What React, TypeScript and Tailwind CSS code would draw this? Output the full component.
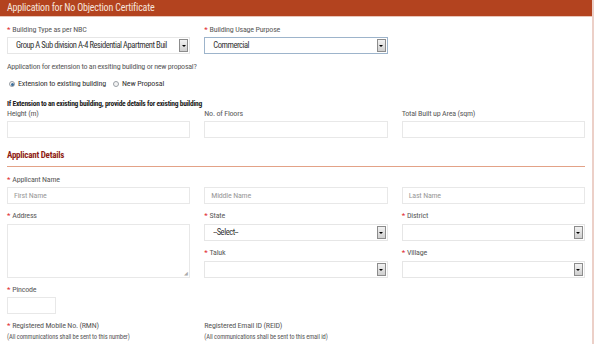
import React from "react";

const F = { fontFamily: '"Roboto Condensed", "Liberation Sans Narrow", Roboto, sans-serif' };

function Req() {
  return <span className="text-[#e0272d] mr-[2px]">*</span>;
}

function Label({ req, children }: { req?: boolean; children: React.ReactNode }) {
  return (
    <div className="h-[10px] leading-[10px] text-[8px] tracking-[-0.2px] text-[#5a5a5a] whitespace-nowrap">
      {req && <Req />}
      {children}
    </div>
  );
}

function Arrow() {
  return (
    <div className="absolute right-[1px] top-[1px] bottom-[1px] w-[9px] bg-gradient-to-b from-[#f2f2f2] to-[#cfcfcf] border border-[#8c8c8c] flex items-center justify-center">
      <div className="w-0 h-0 border-l-[2px] border-r-[2px] border-t-[2px] border-l-transparent border-r-transparent border-t-black" />
    </div>
  );
}

function Select({ text, blue }: { text?: string; blue?: boolean }) {
  return (
    <div
      className={`relative w-full h-[17px] border ${blue ? "border-[#9db4cb]" : "border-[#e6e6e6]"} bg-white flex items-center pl-[8px] text-[8.5px] tracking-[-0.45px] text-[#333] whitespace-nowrap`}
    >
      <span className="block overflow-hidden w-[calc(100%-14px)]">{text}</span>
      <Arrow />
    </div>
  );
}

function Input({ ph, w }: { ph?: string; w?: string }) {
  return (
    <div className={`${w ?? "w-full"} h-[17px] border border-[#e8e8e8] bg-white flex items-center pl-[6px] text-[8px] tracking-[-0.2px] text-[#9a9a9a]`}>
      {ph}
    </div>
  );
}

function Radio({ on }: { on?: boolean }) {
  return (
    <div className="w-[6px] h-[6px] rounded-full border border-[#9aa0a6] bg-[#f4f4f4] flex items-center justify-center">
      {on && <div className="w-[3px] h-[3px] rounded-full bg-[#3d6f9c]" />}
    </div>
  );
}

export default function App() {
  return (
    <div className="w-[597px] h-[344px] overflow-hidden bg-white" style={F}>
      <div className="w-[594px] h-[344px] border-r-2 border-[#ecd0c8]">
        <div className="h-[17px] bg-[#b3431f] text-[#f6e4dc] text-[10px] tracking-[-0.2px] leading-[16px] pl-[7px] border-b border-[#e9c5b8]">
          Application for No Objection Certificate
        </div>
        <div className="px-[7px]">
          <div className="grid grid-cols-3 gap-x-[14px] mt-[8px]">
            <div>
              <Label req>Building Type as per NBC</Label>
              <div className="mt-[2px]">
                <Select text="Group A Sub division A-4 Residential Apartment Buil" />
              </div>
            </div>
            <div>
              <Label req>Building Usage Purpose</Label>
              <div className="mt-[2px]">
                <Select text="Commercial" blue />
              </div>
            </div>
          </div>

          <div className="mt-[8px] h-[10px] leading-[10px] text-[8px] tracking-[-0.25px] text-[#5a5a5a]">
            Application for extension to an exsiting building or new proposal?
          </div>
          <div className="mt-[7px] h-[10px] flex items-center text-[8px] tracking-[-0.15px] text-[#333]">
            <div className="ml-[2px] mr-[3px]">
              <Radio on />
            </div>
            <span>Extension to existing building</span>
            <div className="ml-[7px] mr-[3px]">
              <Radio />
            </div>
            <span>New Proposal</span>
          </div>

          <div className="mt-[10px] h-[10px] leading-[10px] text-[7.5px] tracking-[-0.25px] font-bold text-[#222]">
            If Extension to an existing building, provide details for existing building
          </div>
          <div className="grid grid-cols-3 gap-x-[14px]">
            <div>
              <Label>Height (m)</Label>
              <div className="mt-[2px]"><Input /></div>
            </div>
            <div>
              <Label>No. of Floors</Label>
              <div className="mt-[2px]"><Input /></div>
            </div>
            <div>
              <Label>Total Built up Area (sqm)</Label>
              <div className="mt-[2px]"><Input /></div>
            </div>
          </div>

          <div className="mt-[12px] h-[10px] leading-[10px] text-[9px] tracking-[-0.25px] font-bold text-[#8f1d14]">
            Applicant Details
          </div>
          <div className="mt-[6px] h-px bg-[#e3a287]" />

          <div className="mt-[8px]">
            <Label req>Applicant Name</Label>
          </div>
          <div className="grid grid-cols-3 gap-x-[14px] mt-[2px]">
            <Input ph="First Name" />
            <Input ph="Middle Name" />
            <Input ph="Last Name" />
          </div>

          <div className="grid grid-cols-3 gap-x-[14px] mt-[7px]">
            <div>
              <Label req>Address</Label>
              <div className="mt-[3px] relative h-[54px] border border-[#e8e8e8]">
                <div className="absolute right-[1px] bottom-[1px] text-[5px] leading-[5px] text-[#aaa]">◢</div>
              </div>
            </div>
            <div>
              <Label req>State</Label>
              <div className="mt-[3px]">
                <Select text="--Select--" />
              </div>
              <div className="mt-[7px]">
                <Label req>Taluk</Label>
              </div>
              <div className="mt-[3px]">
                <Select />
              </div>
            </div>
            <div>
              <Label req>District</Label>
              <div className="mt-[3px]">
                <Select />
              </div>
              <div className="mt-[7px]">
                <Label req>Village</Label>
              </div>
              <div className="mt-[3px]">
                <Select />
              </div>
            </div>
          </div>

          <div className="mt-[7px]">
            <Label req>Pincode</Label>
          </div>
          <div className="mt-[2px]">
            <Input w="w-[49px]" />
          </div>

          <div className="grid grid-cols-3 gap-x-[14px] mt-[7px]">
            <div>
              <Label req>Registered Mobile No. (RMN)</Label>
              <div className="mt-[1px] h-[10px] leading-[10px] text-[6.5px] tracking-[-0.1px] text-[#555] whitespace-nowrap">
                (All communications shall be sent to this number)
              </div>
              <div className="mt-[2px]"><Input /></div>
            </div>
            <div>
              <Label>Registered Email ID (REID)</Label>
              <div className="mt-[1px] h-[10px] leading-[10px] text-[6.5px] tracking-[-0.1px] text-[#555] whitespace-nowrap">
                (All communications shall be sent to this email id)
              </div>
              <div className="mt-[2px]"><Input /></div>
            </div>
          </div>
        </div>
      </div>
    </div>
  );
}
